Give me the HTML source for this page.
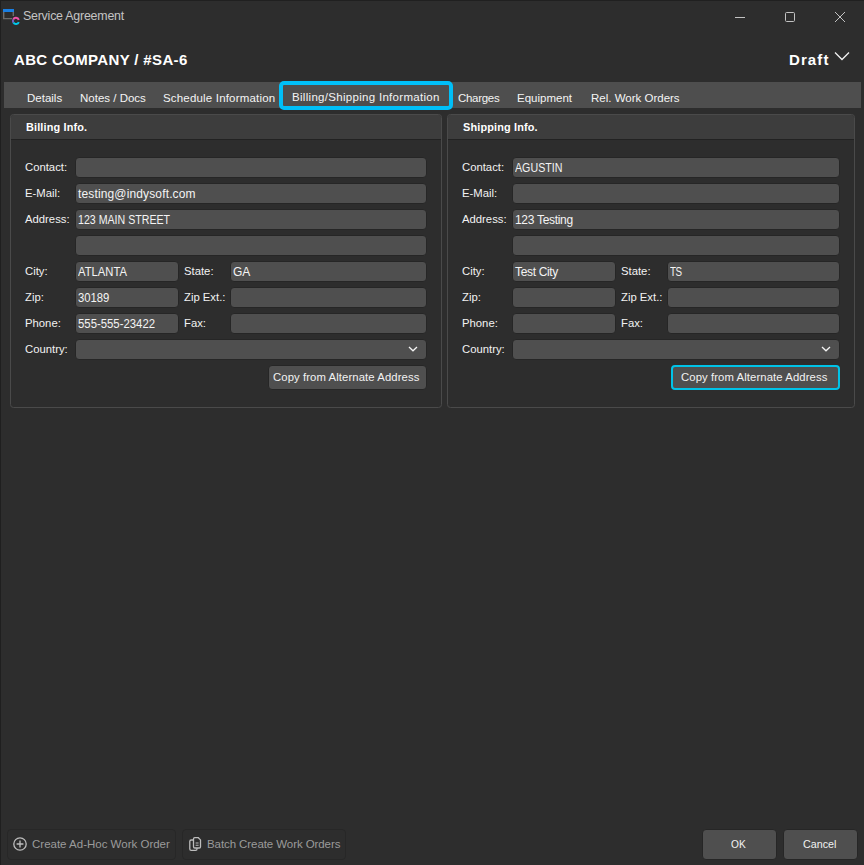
<!DOCTYPE html>
<html><head><meta charset="utf-8">
<style>
*{box-sizing:border-box;margin:0;padding:0}
html,body{width:864px;height:865px;overflow:hidden;background:#2d2d2d}
body{position:relative;font-family:"Liberation Sans",sans-serif;color:#f2f2f2;font-size:11.5px}
.a{position:absolute;white-space:nowrap}
#edgeL{left:0;top:0;width:1px;height:865px;background:#1f1f1f}
#edgeT{left:0;top:0;width:864px;height:1px;background:#202020}
.title{left:23px;top:9px;font-size:12.4px;letter-spacing:-0.22px;color:#c4c4c4}
.hdr{font-weight:bold;font-size:15px;color:#fff;letter-spacing:0.35px}
.tabstrip{left:4px;top:82px;width:857px;height:26px;background:#4e4e4e}
.tab{top:92px;font-size:11.5px;color:#f4f4f4}
.seltab{left:279px;top:81px;width:174px;height:29px;border:4px solid #00bff8;border-radius:5px;background:#4e4e4e}
.panel{border:1px solid #4a4a4a;border-radius:3.5px;background:#2d2d2d;overflow:hidden}
.ph{position:absolute;left:0;top:0;right:0;height:25px;background:#3d3d3d;border-bottom:1px solid #222}
.ptitle{font-weight:bold;font-size:10.9px;color:#fff;letter-spacing:0.15px;margin-top:1px}
.lbl{font-size:11.3px;color:#f2f2f2;margin-top:1px}
.inp{height:21px;background:#4f4f4f;border:1px solid #262626;border-radius:4px}
.val{font-size:12px;color:#f4f4f4;margin-top:1px}
.btn{background:#4f4f4f;border:1px solid #262626;border-radius:4px}
.fbtn{border:1px solid #272727;border-radius:4px}
.ftxt{color:#9b9b9b;font-size:11.5px}
</style></head><body>
<div class="a" id="edgeL"></div>
<div class="a" id="edgeT"></div>

<!-- title bar -->
<svg class="a" style="left:0;top:0" width="24" height="28" viewBox="0 0 24 28">
  <rect x="3" y="9" width="11" height="3" fill="#1a7fe3"/>
  <path d="M3.7 12 V18.6 H12 M13.3 12 V16" stroke="#6c6c6c" stroke-width="1.4" fill="none"/>
  <path d="M13.2 19.6 A3 3 0 0 1 18.8 19.9" stroke="#f052aa" stroke-width="2" fill="none"/>
  <path d="M13.2 19.6 A3 3 0 0 0 13.4 22.6" stroke="#7a5cc4" stroke-width="2" fill="none"/>
  <path d="M13.4 22.6 A3 3 0 0 0 18.8 22.1" stroke="#00c8ec" stroke-width="2" fill="none"/>
</svg>
<div class="a title">Service Agreement</div>
<svg class="a" style="left:730px;top:8px" width="120" height="18" viewBox="0 0 120 18">
  <line x1="5" y1="9.5" x2="15" y2="9.5" stroke="#c2c2c2" stroke-width="1"/>
  <rect x="55.5" y="4.5" width="9" height="9" rx="1.1" stroke="#c2c2c2" stroke-width="1" fill="none"/>
  <path d="M105 4 L115 14 M115 4 L105 14" stroke="#c2c2c2" stroke-width="1"/>
</svg>

<!-- header -->
<div class="a hdr" style="left:14px;top:51px">ABC COMPANY / #SA-6</div>
<div class="a hdr" style="left:789px;top:51px;letter-spacing:1.1px">Draft</div>
<svg class="a" style="left:834px;top:51px" width="16" height="10" viewBox="0 0 16 10">
  <path d="M1 1.5 L8 8.5 L15 1.5" stroke="#f0f0f0" stroke-width="1.3" fill="none"/>
</svg>

<!-- tabs -->
<div class="a tabstrip"></div>
<div class="a seltab"></div>
<div class="a tab" style="left:27px">Details</div>
<div class="a tab" style="left:80px">Notes / Docs</div>
<div class="a tab" style="left:163px;letter-spacing:0.18px">Schedule Information</div>
<div class="a tab" style="left:292px;top:91px;letter-spacing:0.3px">Billing/Shipping Information</div>
<div class="a tab" style="left:458px;letter-spacing:-0.3px">Charges</div>
<div class="a tab" style="left:517px">Equipment</div>
<div class="a tab" style="left:591px">Rel. Work Orders</div>

<!-- billing panel -->
<div class="a panel" style="left:10px;top:114px;width:432px;height:294px">
  <div class="ph"></div>
</div>
<div class="a ptitle" style="left:26px;top:120px">Billing Info.</div>

<div class="a lbl" style="left:25px;top:160px">Contact:</div>
<div class="a inp" style="left:75px;top:157px;width:352px"></div>
<div class="a lbl" style="left:25px;top:186px">E-Mail:</div>
<div class="a inp" style="left:75px;top:183px;width:352px"></div>
<div class="a val" style="left:78px;top:186px;letter-spacing:0.14px">testing@indysoft.com</div>
<div class="a lbl" style="left:25px;top:212px">Address:</div>
<div class="a inp" style="left:75px;top:209px;width:352px"></div>
<div class="a val" style="left:78px;top:212px;transform:scaleX(0.885);transform-origin:0 0">123 MAIN STREET</div>
<div class="a inp" style="left:75px;top:235px;width:352px"></div>
<div class="a lbl" style="left:25px;top:264px">City:</div>
<div class="a inp" style="left:75px;top:261px;width:104px"></div>
<div class="a val" style="left:78px;top:264px;transform:scaleX(0.937);transform-origin:0 0">ATLANTA</div>
<div class="a lbl" style="left:184px;top:264px">State:</div>
<div class="a inp" style="left:230px;top:261px;width:197px"></div>
<div class="a val" style="left:233px;top:264px;letter-spacing:0px">GA</div>
<div class="a lbl" style="left:25px;top:290px">Zip:</div>
<div class="a inp" style="left:75px;top:287px;width:104px"></div>
<div class="a val" style="left:78px;top:290px;transform:scaleX(0.94);transform-origin:0 0">30189</div>
<div class="a lbl" style="left:184px;top:290px">Zip Ext.:</div>
<div class="a inp" style="left:230px;top:287px;width:197px"></div>
<div class="a lbl" style="left:25px;top:316px">Phone:</div>
<div class="a inp" style="left:75px;top:313px;width:104px"></div>
<div class="a val" style="left:78px;top:316px;transform:scaleX(0.946);transform-origin:0 0">555-555-23422</div>
<div class="a lbl" style="left:184px;top:316px">Fax:</div>
<div class="a inp" style="left:230px;top:313px;width:197px"></div>
<div class="a lbl" style="left:25px;top:342px">Country:</div>
<div class="a inp" style="left:75px;top:339px;width:352px"></div>
<svg class="a" style="left:406px;top:344px" width="14" height="10" viewBox="0 0 14 10"><path d="M3 3 L7 6.8 L11 3" stroke="#f4f4f4" stroke-width="1.3" fill="none"/></svg>
<div class="a btn" style="left:268px;top:365px;width:159px;height:25px"></div>
<div class="a lbl" style="left:273px;top:370px;letter-spacing:0.1px">Copy from Alternate Address</div>

<!-- shipping panel -->
<div class="a panel" style="left:447px;top:114px;width:408px;height:294px">
  <div class="ph"></div>
</div>
<div class="a ptitle" style="left:463px;top:120px">Shipping Info.</div>

<div class="a lbl" style="left:462px;top:160px">Contact:</div>
<div class="a inp" style="left:512px;top:157px;width:328px"></div>
<div class="a val" style="left:515px;top:160px;transform:scaleX(0.89);transform-origin:0 0">AGUSTIN</div>
<div class="a lbl" style="left:462px;top:186px">E-Mail:</div>
<div class="a inp" style="left:512px;top:183px;width:328px"></div>
<div class="a lbl" style="left:462px;top:212px">Address:</div>
<div class="a inp" style="left:512px;top:209px;width:328px"></div>
<div class="a val" style="left:515px;top:212px;letter-spacing:-0.3px">123 Testing</div>
<div class="a inp" style="left:512px;top:235px;width:328px"></div>
<div class="a lbl" style="left:462px;top:264px">City:</div>
<div class="a inp" style="left:512px;top:261px;width:104px"></div>
<div class="a val" style="left:515px;top:264px;letter-spacing:-0.34px">Test City</div>
<div class="a lbl" style="left:621px;top:264px">State:</div>
<div class="a inp" style="left:667px;top:261px;width:173px"></div>
<div class="a val" style="left:670px;top:264px;transform:scaleX(0.82);transform-origin:0 0;letter-spacing:-0.6px">TS</div>
<div class="a lbl" style="left:462px;top:290px">Zip:</div>
<div class="a inp" style="left:512px;top:287px;width:104px"></div>
<div class="a lbl" style="left:621px;top:290px">Zip Ext.:</div>
<div class="a inp" style="left:667px;top:287px;width:173px"></div>
<div class="a lbl" style="left:462px;top:316px">Phone:</div>
<div class="a inp" style="left:512px;top:313px;width:104px"></div>
<div class="a lbl" style="left:621px;top:316px">Fax:</div>
<div class="a inp" style="left:667px;top:313px;width:173px"></div>
<div class="a lbl" style="left:462px;top:342px">Country:</div>
<div class="a inp" style="left:512px;top:339px;width:328px"></div>
<svg class="a" style="left:819px;top:344px" width="14" height="10" viewBox="0 0 14 10"><path d="M3 3 L7 6.8 L11 3" stroke="#f4f4f4" stroke-width="1.3" fill="none"/></svg>
<div class="a btn" style="left:671px;top:365px;width:169px;height:25px;border:2px solid #00c3e8"></div>
<div class="a lbl" style="left:681px;top:370px;letter-spacing:0.1px">Copy from Alternate Address</div>

<!-- footer -->
<div class="a fbtn" style="left:7px;top:829px;width:169px;height:31px"></div>
<svg class="a" style="left:12px;top:836px" width="16" height="16" viewBox="0 0 16 16">
  <circle cx="8" cy="8" r="6.2" stroke="#bdbdbd" stroke-width="1.3" fill="none"/>
  <path d="M4.6 8 H11.4 M8 4.6 V11.4" stroke="#bdbdbd" stroke-width="1.35"/>
</svg>
<div class="a ftxt" style="left:32px;top:838px">Create Ad-Hoc Work Order</div>
<div class="a fbtn" style="left:182px;top:829px;width:164px;height:31px"></div>
<svg class="a" style="left:187px;top:835px" width="16" height="18" viewBox="0 0 16 18">
  <path d="M6.5 5 H4.2 Q2.8 5 2.8 6.4 V13.9 Q2.8 15.3 4.2 15.3 H8.6 Q10 15.3 10 13.9 V13" stroke="#bdbdbd" stroke-width="1.3" fill="none"/>
  <path d="M7.8 2.7 H11.3 L13.5 4.9 V11.7 Q13.5 13 12.2 13 H7.8 Q6.5 13 6.5 11.7 V4 Q6.5 2.7 7.8 2.7 Z" stroke="#bdbdbd" stroke-width="1.3" fill="#2d2d2d"/>
  <path d="M8.6 8 H11.6 M8.6 10.2 H11.6" stroke="#bdbdbd" stroke-width="1.1"/>
</svg>
<div class="a ftxt" style="left:207px;top:838px;letter-spacing:-0.08px">Batch Create Work Orders</div>

<div class="a btn" style="left:702px;top:829px;width:75px;height:31px"></div>
<div class="a lbl" style="left:731px;top:837px;transform:scaleX(0.9);transform-origin:0 0">OK</div>
<div class="a btn" style="left:783px;top:829px;width:75px;height:31px"></div>
<div class="a lbl" style="left:803px;top:837px;transform:scaleX(0.95);transform-origin:0 0">Cancel</div>
</body></html>
